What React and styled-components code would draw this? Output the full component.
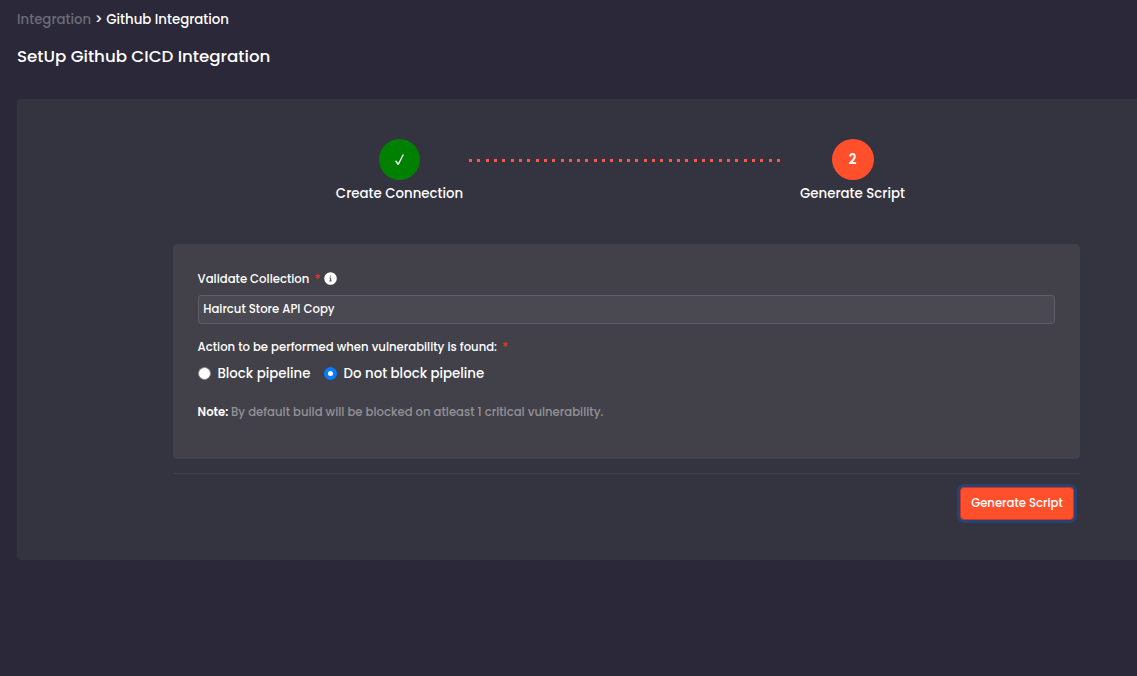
import React, { useState } from 'react'
import styled, { createGlobalStyle } from 'styled-components'

const GlobalStyle = createGlobalStyle`
    * {
        box-sizing: border-box;
    }
    body {
        margin: 0;
        background: #2a2839;
        color: #fff;
        font-family: Poppins, Inter, "Open Sans", sans-serif;
        font-weight: 500;
        font-size: 13.33px;
        overflow: hidden;
    }
`

const Page = styled.div`
    min-height: 676px;
    padding: 10px 0 0 17px;
`

//header
const Breadcrumb = styled.div`
    display: flex;
    gap: 3.6px;
    height: 20px;
    line-height: 20px;
    white-space: nowrap;
`

const Crumb = styled.span`
    color: ${(props) => (props.$muted ? '#6a6d78' : '#fff')};
`

const Title = styled.h1`
    margin: 13px 0 0;
    height: 26px;
    line-height: 26px;
    font-size: 16.67px;
    font-weight: 500;
    white-space: nowrap;
`

const Panel = styled.div`
    margin-top: 30px;
    height: 461px;
    padding: 40px 57px 0 156px;
    background: #343340;
    border-radius: 4px 0 0 4px;
`

//stepper
const Stepper = styled.div`
    display: flex;
    padding-left: 162px;
    height: 105px;
`

const Step = styled.div`
    display: flex;
    flex-direction: column;
    align-items: center;
    width: 129px;
    flex: none;
`

const Circle = styled.div`
    display: flex;
    align-items: center;
    justify-content: center;
    width: ${(props) => (props.$done ? '41px' : '42px')};
    height: 41px;
    border-radius: 50%;
    background: ${(props) => (props.$done ? '#008000' : '#ff4f2b')};
    font-weight: 600;
`

const StepLabel = styled.div`
    margin-top: 4px;
    line-height: 20px;
    white-space: nowrap;
`

const Dots = styled.div`
    flex: none;
    width: 312px;
    height: 3px;
    margin: 20px 7px 0 5px;
    background: repeating-linear-gradient(90deg, #f9594a 0 3px, transparent 3px 8.32px);
`

//form
const Card = styled.div`
    height: 215px;
    padding: 25px 25px 0 24.6px;
    background: #424149;
    border-radius: 4px;
`

const Label = styled.div`
    display: flex;
    align-items: center;
    height: 20px;
    font-size: 11.67px;
    white-space: nowrap;
`

const Star = styled.span`
    margin-left: 5px;
    color: #ff2a1a;
    font-size: 12px;
`

const InfoIcon = styled.svg`
    margin: 0 0 1px 4px;
`

const Input = styled.input`
    display: block;
    width: 857px;
    height: 29px;
    margin: 6px 0 13px;
    padding: 0 5px 1px 4.6px;
    background: #4a4951;
    border: 1px solid #5f5e68;
    border-radius: 3px;
    color: #fff;
    font: inherit;
    font-size: 11.67px;
    outline: none;
`

const RadioRow = styled.div`
    display: flex;
    gap: 13.4px;
    height: 20px;
    margin-top: 7px;
`

const RadioLabel = styled.label`
    display: flex;
    align-items: center;
    gap: 6.8px;
    white-space: nowrap;
`

const Radio = styled.input`
    appearance: none;
    width: 13px;
    height: 13px;
    margin: 0 0 1px;
    flex: none;
    border-radius: 50%;
    border: 1px solid #85848a;
    background: #fff;
    &:checked {
        border: 4px solid #0a7aff;
    }
`

const Note = styled.div`
    margin-top: 18px;
    line-height: 20px;
    font-size: 11.67px;
    color: #929196;
    white-space: nowrap;
`

const NoteTitle = styled.span`
    color: #fff;
    font-weight: 600;
    margin-right: 2.6px;
`

const Footer = styled.div`
    display: flex;
    justify-content: flex-end;
    margin-top: 14px;
    padding: 13px 6px 0 0;
    border-top: 1px solid #42414d;
`

const Button = styled.button`
    width: 114px;
    height: 33px;
    padding: 0 0 1px;
    background: #ff4f2b;
    color: #fff;
    border: 1px solid #c6362f;
    border-radius: 4px;
    box-shadow: 0 0 0 3px #294370;
    font: inherit;
    font-size: 11.67px;
    white-space: nowrap;
    cursor: pointer;
`

const App = () => {
    const [action, setAction] = useState('pass')
    const [collection, setCollection] = useState('Haircut Store API Copy')

    return (
        <Page>
            <GlobalStyle />
            <Breadcrumb>
                <Crumb $muted>Integration</Crumb>
                <Crumb>&gt;</Crumb>
                <Crumb>Github Integration</Crumb>
            </Breadcrumb>
            <Title>SetUp Github CICD Integration</Title>
            <Panel>
                <Stepper>
                    <Step>
                        <Circle $done>
                            <svg width="11" height="12" viewBox="0 0 11 12">
                                <path d="M1 7.1 2.3 6.4l1.9 2.6L8.7.6l1.3-.2L4.8 10.8H3.5z" fill="#fff" />
                            </svg>
                        </Circle>
                        <StepLabel>Create Connection</StepLabel>
                    </Step>
                    <Dots />
                    <Step>
                        <Circle>2</Circle>
                        <StepLabel>Generate Script</StepLabel>
                    </Step>
                </Stepper>
                <Card>
                    <Label>
                        Validate Collection
                        <Star>*</Star>
                        <InfoIcon width="13" height="13" viewBox="0 0 13 13">
                            <circle cx="6.5" cy="6.5" r="6.3" fill="#fff" />
                            <path d="M5.9 3.4h1.3v1.2H5.9zM5.4 5.6h1.8v2.9h.6v.9H5.3v-.9h.6V6.5h-.5z" fill="#5c6670" />
                        </InfoIcon>
                    </Label>
                    <Input value={collection} onChange={(e) => setCollection(e.target.value)} />
                    <Label>
                        Action to be performed when vulnerability is found:
                        <Star>*</Star>
                    </Label>
                    <RadioRow>
                        <RadioLabel>
                            <Radio type="radio" name="action" checked={action === 'block'} onChange={() => setAction('block')} />
                            Block pipeline
                        </RadioLabel>
                        <RadioLabel>
                            <Radio type="radio" name="action" checked={action === 'pass'} onChange={() => setAction('pass')} />
                            Do not block pipeline
                        </RadioLabel>
                    </RadioRow>
                    <Note>
                        <NoteTitle>Note:</NoteTitle>
                        By default build will be blocked on atleast 1 critical vulnerability.
                    </Note>
                </Card>
                <Footer>
                    <Button>Generate Script</Button>
                </Footer>
            </Panel>
        </Page>
    )
}

export default App
